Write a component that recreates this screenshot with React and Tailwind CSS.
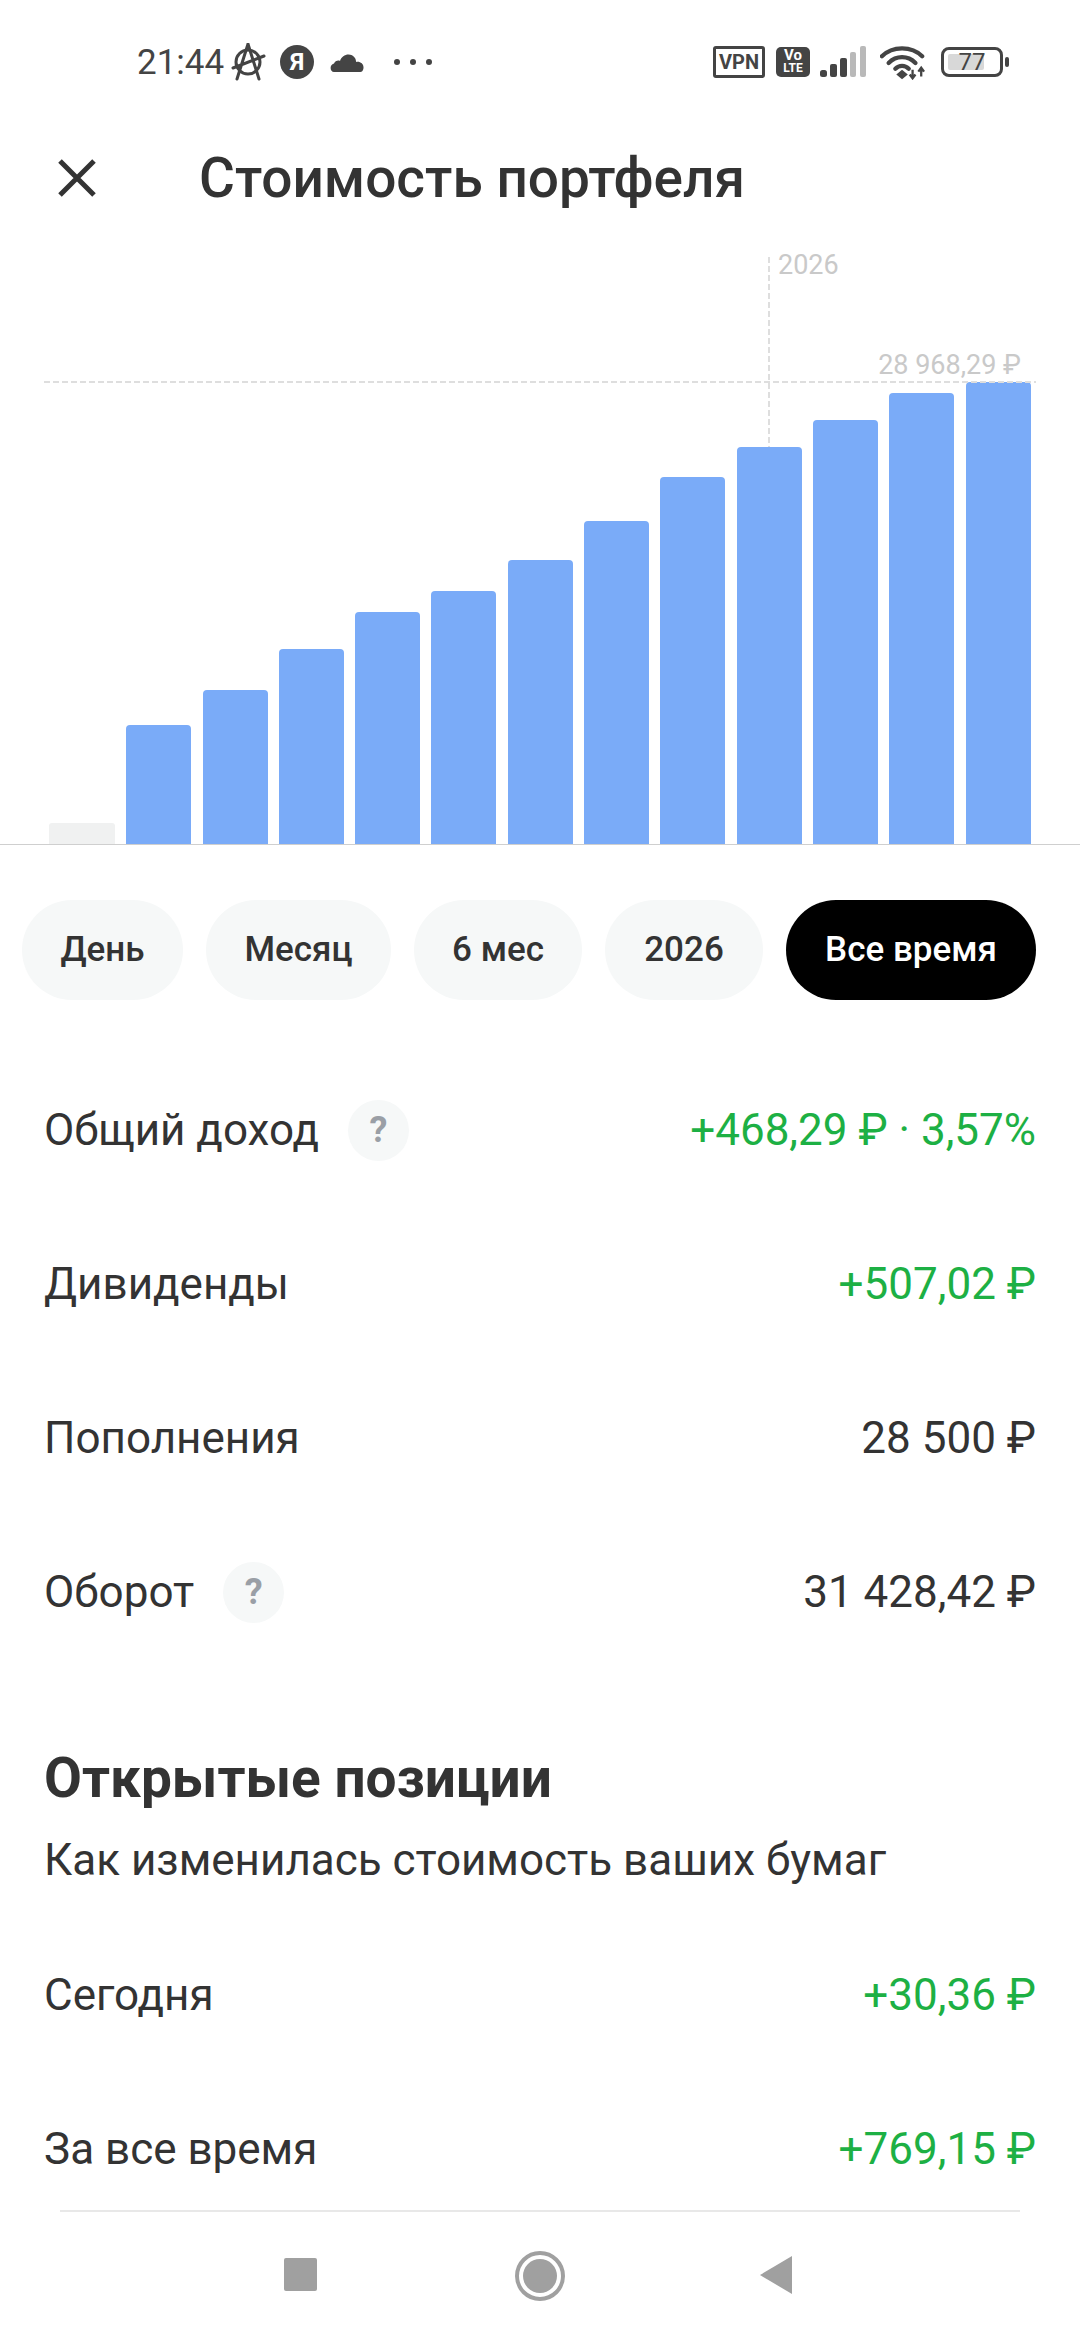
import React from "react"

const bars = [725, 690, 649, 612, 591, 560, 521, 477, 447, 420, 393, 382]

const ROBOTO = "font-['Roboto',sans-serif]"

const AnarchyIcon = () => (
  <svg width="36" height="38" viewBox="0 0 36 38" fill="none" stroke="#444" strokeWidth="3">
    <circle cx="18" cy="19" r="12" />
    <path d="M18 1 L7 36 M18 1 L29 36 M3 25 L34 13" strokeLinecap="round" />
  </svg>
)

const CloudIcon = () => (
  <svg width="34" height="22" viewBox="0 0 34 22" fill="#444">
    <path d="M4 21 C0 21 -1 14 4 12.500 C5 10 8 9 10 10 C12 3 21 1 25 7 C26 9 26 10 26 11 C31 10 35 14 33 19 C32 21 31 21 29 21 Z" />
  </svg>
)

const SignalIcon = () => (
  <svg width="46" height="32" viewBox="0 0 46 32">
    <rect x="0" y="24" width="7" height="7" rx="2.500" fill="#444" />
    <rect x="10" y="18" width="7" height="13" rx="2" fill="#444" />
    <rect x="20" y="12" width="7" height="19" rx="2" fill="#444" />
    <rect x="30" y="6" width="6" height="25" rx="2" fill="#b9b9b9" />
    <rect x="40" y="0" width="6" height="31" rx="2" fill="#b9b9b9" />
  </svg>
)

const WifiIcon = () => (
  <svg width="46" height="36" viewBox="0 0 48 36" fill="none">
    <path d="M2 12 C13 1 33 1 44 12" stroke="#444" strokeWidth="4.500" strokeLinecap="round" />
    <path d="M9 19 C17 11 29 11 37 19" stroke="#444" strokeWidth="4.500" strokeLinecap="round" />
    <path d="M16 25 C20 21 26 21 30 25" stroke="#444" strokeWidth="4.500" strokeLinecap="round" />
    <path d="M23 26 L29 31 L23 36 L17 31 Z" fill="#444" />
    <path d="M34 26 V35 M43 24 V33 M31 31 L34 35 L37 31 M40 28 L43 24 L46 28" stroke="#444" strokeWidth="2.400" />
  </svg>
)

const QuestionBadge = () => (
  <div className="w-[61px] h-[61px] rounded-full bg-[#f6f8f8] flex items-center justify-center text-[36px] font-bold text-[#9a9fa6] leading-none">
    ?
  </div>
)

const Row = ({ label, value, green, hint }) => (
  <div className="h-[154px] flex items-center justify-between px-[44px]">
    <div className="flex items-center">
      <span>{ label }</span>
      { hint ? <div className="ml-[29px]"><QuestionBadge /></div> : null }
    </div>
    <span className={ green ? "text-[#1db044]" : "" }>{ value }</span>
  </div>
)

const Pill = ({ children, active, width }) => (
  <div className={ `h-[100px] rounded-full flex items-center justify-center text-[35px] font-medium ${ width } ${ active ? "bg-black text-white" : "bg-[#f6f8f8] text-[#333]" }` }>
    { children }
  </div>
)

export default function App() {
  return (
    <div className={ `${ ROBOTO } relative w-[1080px] h-[2340px] overflow-hidden bg-white text-[#333] text-[44px]` }>

      <div className="h-[124px] flex items-center pl-[137px] pr-[71px] text-[#444]">
        <span className="text-[35px] leading-none w-[93px]">21:44</span>
        <AnarchyIcon />
        <div className="ml-[14px] w-[34px] h-[34px] rounded-full bg-[#444] text-white text-[24px] font-bold flex items-center justify-center leading-none">Я</div>
        <div className="ml-[16px]"><CloudIcon /></div>
        <div className="ml-[30px] flex gap-[10px]">
          <div className="w-[6px] h-[6px] rounded-full bg-[#444]" />
          <div className="w-[6px] h-[6px] rounded-full bg-[#444]" />
          <div className="w-[6px] h-[6px] rounded-full bg-[#444]" />
        </div>
        <div className="ml-auto flex items-center">
          <div className="w-[52px] h-[32px] border-[3px] border-[#444] rounded-[3px] text-[20px] font-bold flex items-center justify-center leading-none">VPN</div>
          <div className="ml-[11px] w-[34px] h-[30px] bg-[#444] rounded-[5px] text-white font-bold flex flex-col items-center justify-center">
            <span className="text-[15px] leading-[13px]">Vo</span>
            <span className="text-[12px] leading-[13px]">LTE</span>
          </div>
          <div className="ml-[10px]"><SignalIcon /></div>
          <div className="ml-[14px]"><WifiIcon /></div>
          <div className="ml-[15px] relative w-[62px] h-[30px] border-[3px] border-[#444] rounded-[8px] flex items-center px-[4px]">
            <div className="absolute left-[4px] top-[4px] bottom-[4px] w-[36px] bg-[#d8d8d8] rounded-[2px]" />
            <span className="relative w-full text-center text-[24px] leading-none">77</span>
          </div>
          <div className="ml-[2px] w-[4px] h-[10px] bg-[#444] rounded-full" />
        </div>
      </div>

      <div className="h-[108px] flex items-center pl-[58px]">
        <svg width="38" height="38" viewBox="0 0 38 38" stroke="#333" strokeWidth="5" fill="none">
          <path d="M2 2 L36 36 M36 2 L2 36" />
        </svg>
        <h1 className="ml-[103px] text-[55px] font-medium leading-none">Стоимость портфеля</h1>
      </div>

      <div className="relative h-[613px] border-b border-[#cfcfcf] flex items-end pl-[49px] gap-[11.3px]">
        <div className="w-[66px] h-[21px] bg-[#f0f1f1] rounded-t-[3px]" />
        { bars.map(top => (
          <div key={ top } className="w-[65px] bg-[#7aabf8] rounded-t-[4px]"
            style={ { height: 844 - top } } />
        )) }
        <div className="absolute left-[44px] w-[992px] top-[149px] h-[2px] bg-[repeating-linear-gradient(90deg,#dedede_0_6px,transparent_6px_9px)]" />
        <div className="absolute left-[768px] top-[25px] h-[190px] w-[2px] bg-[repeating-linear-gradient(180deg,#dedede_0_6px,transparent_6px_9px)]" />
        <span className="absolute left-[778px] top-[20px] text-[27px] leading-[26px] text-[#c9c9c9]">2026</span>
        <span className="absolute right-[59px] top-[120px] text-[27px] leading-[26px] text-[#c9c9c9]">28 968,29 ₽</span>
      </div>

      <div className="mt-[55px] pl-[22px] flex gap-[23px]">
        <Pill width="w-[161px]">День</Pill>
        <Pill width="w-[185px]">Месяц</Pill>
        <Pill width="w-[168px]">6 мес</Pill>
        <Pill width="w-[158px]">2026</Pill>
        <Pill width="w-[250px]" active>Все время</Pill>
      </div>

      <div className="mt-[53px]">
        <Row label="Общий доход" value="+468,29 ₽ · 3,57%" green hint />
        <Row label="Дивиденды" value="+507,02 ₽" green />
        <Row label="Пополнения" value="28 500 ₽" />
        <Row label="Оборот" value="31 428,42 ₽" hint />
      </div>

      <div className="mt-[79px] px-[44px]">
        <h2 className="text-[55px] font-bold leading-[60px]">Открытые позиции</h2>
        <p className="mt-[28px] leading-[48px]">Как изменилась стоимость ваших бумаг</p>
      </div>

      <div className="mt-[34px]">
        <Row label="Сегодня" value="+30,36 ₽" green />
        <Row label="За все время" value="+769,15 ₽" green />
      </div>

      <div className="absolute left-0 right-0 bottom-0 h-[130px] bg-white">
        <div className="mx-[60px] border-t-2 border-[#e8e8e8]" />
        <div className="relative h-[128px] flex items-center justify-center">
          <div className="absolute left-[284px] top-[46px] w-[33px] h-[33px] bg-[#a0a0a0] rounded-[2px]" />
          <svg className="absolute left-[515px] top-[39px]" width="50" height="50" viewBox="0 0 50 50">
            <circle cx="25" cy="25" r="23" fill="none" stroke="#a0a0a0" strokeWidth="4" />
            <circle cx="25" cy="25" r="17" fill="#a0a0a0" />
          </svg>
          <svg className="absolute left-[759px] top-[44px]" width="34" height="38" viewBox="0 0 34 38">
            <path d="M33 0 V38 L1 19 Z" fill="#a0a0a0" />
          </svg>
        </div>
      </div>
    </div>
  )
}
